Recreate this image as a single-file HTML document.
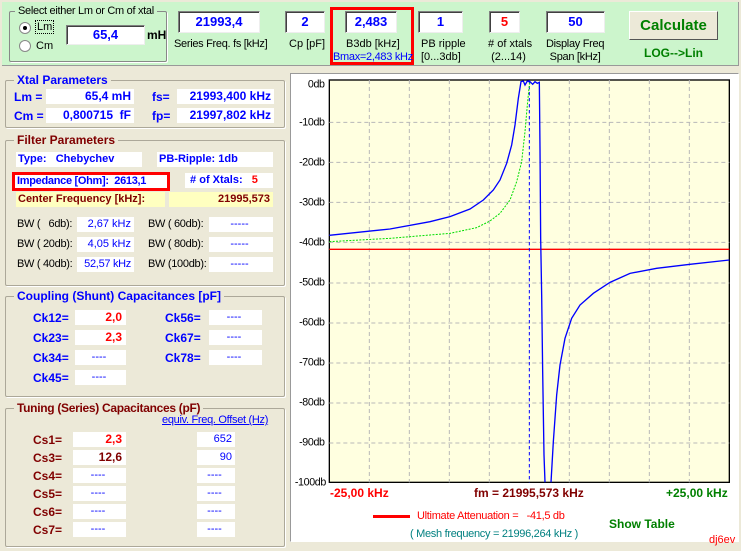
<!DOCTYPE html>
<html><head><meta charset="utf-8"><style>
*{margin:0;padding:0;box-sizing:border-box}
body{width:741px;height:551px;background:#ece9d8;font-family:"Liberation Sans",sans-serif;font-size:11px;position:relative;overflow:hidden}
.a{position:absolute;white-space:nowrap}
.b{font-weight:bold}
.in{position:absolute;background:#fff;border:1px solid #808080;border-right-color:#eee;border-bottom-color:#eee;box-shadow:inset 1px 1px 0 #404040;text-align:center;font-weight:bold;color:#00f;font-size:13px;line-height:18px;white-space:nowrap}
.grp{position:absolute;border:1px solid #aca899;border-radius:2px;box-shadow:1px 1px 0 #fff}
.gt{position:absolute;top:-8px;left:8px;background:#ece9d8;padding:0 3px;font-weight:bold;font-size:12px;white-space:nowrap}
.blue{color:#00f}.red{color:#f00}.dred{color:#800000}.grn{color:#008000}
.v{position:absolute;background:#fff;text-align:right;padding-right:3px;line-height:15px;white-space:nowrap;overflow:hidden}
.s{letter-spacing:-0.3px}
</style></head><body>
<div class="a" style="left:2px;top:2px;width:737px;height:64px;background:#ccf5cc;border-bottom:1px solid #999;border-right:1px solid #999"></div>
<div class="grp" style="left:9px;top:11px;width:158px;height:51px;border-color:#888"><div class="gt s" style="background:#ccf5cc;font-weight:normal;font-size:11px;left:5px;top:-7px">Select either Lm or Cm of xtal</div></div>
<div class="a" style="left:19px;top:22px;width:12px;height:12px;border-radius:50%;background:#fff;border:1px solid #888"><div style="position:absolute;left:3px;top:3px;width:4px;height:4px;border-radius:50%;background:#000"></div></div>
<div class="a" style="left:35px;top:20px;border:1px dotted #000;padding:0 1px">Lm</div>
<div class="a" style="left:19px;top:40px;width:12px;height:12px;border-radius:50%;background:#fff;border:1px solid #888"></div>
<div class="a" style="left:36px;top:40px">Cm</div>
<div class="in" style="left:66px;top:25px;width:79px;height:20px">65,4</div>
<div class="a b" style="left:147px;top:28px;font-size:12px">mH</div>
<div class="in" style="left:178px;top:11px;width:82px;height:22px;line-height:20px">21993,4</div>
<div class="a s" style="left:174px;top:38px">Series Freq. fs [kHz]</div>
<div class="in" style="left:285px;top:11px;width:40px;height:22px;line-height:20px">2</div>
<div class="a" style="left:289px;top:38px">Cp [pF]</div>
<div class="a" style="left:330px;top:7px;width:84px;height:58px;border:3px solid #f00"></div>
<div class="in" style="left:345px;top:11px;width:52px;height:22px;line-height:20px">2,483</div>
<div class="a" style="left:346px;top:38px">B3db [kHz]</div>
<div class="a blue s" style="left:333px;top:51px">Bmax=2,483 kHz</div>
<div class="in" style="left:418px;top:11px;width:45px;height:22px;line-height:20px">1</div>
<div class="a" style="left:421px;top:38px;line-height:13px">PB ripple<br>[0...3db]</div>
<div class="in" style="left:489px;top:11px;width:31px;height:22px;line-height:20px;color:#f00">5</div>
<div class="a" style="left:485px;top:38px;line-height:13px;text-align:center">&nbsp;# of xtals<br>(2...14)</div>
<div class="in" style="left:546px;top:11px;width:59px;height:22px;line-height:20px">50</div>
<div class="a s" style="left:546px;top:38px;line-height:13px;text-align:center">Display Freq<br>Span [kHz]</div>
<div class="a b grn" style="left:629px;top:11px;width:89px;height:29px;background:#ece9d8;border:1px solid #fff;border-right-color:#555;border-bottom-color:#555;text-align:center;line-height:27px;font-size:15px">Calculate</div>
<div class="a b grn" style="left:644px;top:46px;font-size:12px">LOG--&gt;Lin</div>

<div class="grp" style="left:5px;top:80px;width:280px;height:48px"><div class="gt blue">Xtal Parameters</div></div>
<div class="a b blue" style="left:14px;top:90px;font-size:12px">Lm =</div>
<div class="v b blue" style="left:46px;top:89px;width:88px;font-size:12px">65,4 mH</div>
<div class="a b blue" style="left:152px;top:90px;font-size:12px">fs=</div>
<div class="v b blue" style="left:177px;top:89px;width:97px;font-size:12px">21993,400 kHz</div>
<div class="a b blue" style="left:14px;top:109px;font-size:12px">Cm =</div>
<div class="v b blue" style="left:46px;top:108px;width:88px;font-size:12px">0,800715&nbsp; fF</div>
<div class="a b blue" style="left:152px;top:109px;font-size:12px">fp=</div>
<div class="v b blue" style="left:177px;top:108px;width:97px;font-size:12px">21997,802 kHz</div>

<div class="grp" style="left:5px;top:140px;width:280px;height:146px"><div class="gt dred">Filter Parameters</div></div>
<div class="v b blue" style="left:16px;top:152px;width:126px;text-align:left;padding-left:2px">Type:&nbsp;&nbsp; Chebychev</div>
<div class="v b blue" style="left:157px;top:152px;width:116px;text-align:left;padding-left:2px">PB-Ripple: 1db</div>
<div class="a" style="left:12px;top:172px;width:158px;height:19px;border:3px solid #f00;background:#fff"></div>
<div class="a b blue s" style="left:17px;top:175px">Impedance [Ohm]:&nbsp; 2613,1</div>
<div class="v b blue" style="left:185px;top:173px;width:88px;text-align:left;padding-left:2px">&nbsp;# of Xtals:&nbsp;&nbsp; <span class="red">5</span></div>
<div class="v b dred" style="left:16px;top:192px;width:149px;background:#ffffc0;text-align:left;padding-left:2px">Center Frequency [kHz]:</div>
<div class="v b dred" style="left:169px;top:192px;width:104px;background:#ffffc0">21995,573</div>
<div class="a s" style="left:17px;top:218px">BW (&nbsp;&nbsp; 6db):</div>
<div class="v blue" style="left:77px;top:217px;width:57px">2,67 kHz</div>
<div class="a s" style="left:148px;top:218px">BW ( 60db):</div>
<div class="v blue" style="left:209px;top:217px;width:64px;text-align:center">-----</div>
<div class="a s" style="left:17px;top:238px">BW ( 20db):</div>
<div class="v blue" style="left:77px;top:237px;width:57px">4,05 kHz</div>
<div class="a s" style="left:148px;top:238px">BW ( 80db):</div>
<div class="v blue" style="left:209px;top:237px;width:64px;text-align:center">-----</div>
<div class="a s" style="left:17px;top:258px">BW ( 40db):</div>
<div class="v blue s" style="left:77px;top:257px;width:57px">52,57 kHz</div>
<div class="a s" style="left:148px;top:258px">BW (100db):</div>
<div class="v blue" style="left:209px;top:257px;width:64px;text-align:center">-----</div>

<div class="grp" style="left:5px;top:296px;width:280px;height:101px"><div class="gt blue">Coupling (Shunt) Capacitances [pF]</div></div>
<div class="a b blue" style="left:33px;top:311px;font-size:12px">Ck12=</div><div class="v b red" style="left:75px;top:310px;width:51px;font-size:12px;padding-right:4px">2,0</div>
<div class="a b blue" style="left:33px;top:331px;font-size:12px">Ck23=</div><div class="v b red" style="left:75px;top:330px;width:51px;font-size:12px;padding-right:4px">2,3</div>
<div class="a b blue" style="left:33px;top:351px;font-size:12px">Ck34=</div><div class="v blue" style="left:75px;top:350px;width:51px;text-align:center">----</div>
<div class="a b blue" style="left:33px;top:371px;font-size:12px">Ck45=</div><div class="v blue" style="left:75px;top:370px;width:51px;text-align:center">----</div>
<div class="a b blue" style="left:165px;top:311px;font-size:12px">Ck56=</div><div class="v blue" style="left:209px;top:310px;width:53px;text-align:center">----</div>
<div class="a b blue" style="left:165px;top:331px;font-size:12px">Ck67=</div><div class="v blue" style="left:209px;top:330px;width:53px;text-align:center">----</div>
<div class="a b blue" style="left:165px;top:351px;font-size:12px">Ck78=</div><div class="v blue" style="left:209px;top:350px;width:53px;text-align:center">----</div>

<div class="grp" style="left:5px;top:408px;width:280px;height:139px"><div class="gt dred s">Tuning (Series) Capacitances (pF)</div></div>
<div class="a blue s" style="left:162px;top:414px;text-decoration:underline">equiv. Freq. Offset (Hz)</div>
<div class="a b dred" style="left:33px;top:433px;font-size:12px">Cs1=</div><div class="v b red" style="left:73px;top:432px;width:53px;font-size:12px;padding-right:4px">2,3</div><div class="v blue" style="left:197px;top:432px;width:38px">652</div>
<div class="a b dred" style="left:33px;top:451px;font-size:12px">Cs3=</div><div class="v b dred" style="left:73px;top:450px;width:53px;font-size:12px;padding-right:4px">12,6</div><div class="v blue" style="left:197px;top:450px;width:38px">90</div>
<div class="a b dred" style="left:33px;top:469px;font-size:12px">Cs4=</div><div class="v blue" style="left:73px;top:468px;width:53px;text-align:center">----</div><div class="v blue" style="left:197px;top:468px;width:38px;text-align:center">----</div>
<div class="a b dred" style="left:33px;top:487px;font-size:12px">Cs5=</div><div class="v blue" style="left:73px;top:486px;width:53px;text-align:center">----</div><div class="v blue" style="left:197px;top:486px;width:38px;text-align:center">----</div>
<div class="a b dred" style="left:33px;top:505px;font-size:12px">Cs6=</div><div class="v blue" style="left:73px;top:504px;width:53px;text-align:center">----</div><div class="v blue" style="left:197px;top:504px;width:38px;text-align:center">----</div>
<div class="a b dred" style="left:33px;top:523px;font-size:12px">Cs7=</div><div class="v blue" style="left:73px;top:522px;width:53px;text-align:center">----</div><div class="v blue" style="left:197px;top:522px;width:38px;text-align:center">----</div>

<div class="a" style="left:290px;top:73px;width:449px;height:469px;background:#fff;border:1px solid #999;border-right-color:#fff;border-bottom-color:#fff"></div>
<svg class="a" style="left:290px;top:65px" width="451" height="430" viewBox="0 0 1353 1290">
<rect x="118" y="45" width="1200" height="1207" fill="#ffffe0" stroke="#000" stroke-width="4"/>
<g stroke="#b8b8b8" stroke-width="3" stroke-dasharray="12,9">
<path d="M238 45V1252M358 45V1252M478 45V1252M598 45V1252M838 45V1252M958 45V1252M1078 45V1252M1198 45V1252"/>
<path d="M118 172H1318M118 292H1318M118 412H1318M118 532H1318M118 654H1318M118 774H1318M118 894H1318M118 1014H1318M118 1134H1318"/>
</g>
<g font-family="Liberation Sans,sans-serif" font-size="32" text-anchor="end" fill="#000" letter-spacing="-1">
<text x="104" y="68">0db</text><text x="104" y="182">-10db</text><text x="104" y="302">-20db</text><text x="104" y="422">-30db</text><text x="104" y="542">-40db</text><text x="104" y="662">-50db</text><text x="104" y="782">-60db</text><text x="104" y="902">-70db</text><text x="104" y="1022">-80db</text><text x="104" y="1142">-90db</text><text x="108" y="1262">-100db</text>
</g>
<path d="M118 553H1318" stroke="#f00" stroke-width="4"/>
<path d="M718 45V1252" stroke="#00f" stroke-width="3" stroke-dasharray="10,8"/>
<path d="M118 530L300 520L480 505L560 488L600 468L630 445L660 405L680 350L695 290L705 200L712 120L717 70L720 50" fill="none" stroke="#0d0" stroke-width="3" stroke-dasharray="6,4"/>
<path d="M118 511L300 492L420 470L480 455L540 432L580 405L610 375L630 345L650 295L665 240L675 180L685 100L693 50L700 48L705 60L712 48L720 50L728 58L735 50L742 55L748 52L750 250L752 520L755 690L758 920L762 1170L765 1252M783 1252L790 1130L800 990L810 900L825 820L845 760L870 720L910 685L960 652L1020 625L1100 610L1200 598L1318 585" fill="none" stroke="#00f" stroke-width="4"/>
</svg>
<div class="a b red" style="left:330px;top:486px;font-size:12px">-25,00 kHz</div>
<div class="a b dred" style="left:474px;top:486px;font-size:12px">fm = 21995,573 kHz</div>
<div class="a b grn" style="left:666px;top:486px;font-size:12px">+25,00 kHz</div>
<div class="a" style="left:373px;top:515px;width:37px;height:3px;background:#f00"></div>
<div class="a red s" style="left:417px;top:510px">Ultimate Attenuation =&nbsp;&nbsp; -41,5 db</div>
<div class="a s" style="left:410px;top:528px;color:#008080">( Mesh frequency = 21996,264 kHz )</div>
<div class="a b grn" style="left:609px;top:517px;font-size:12px">Show Table</div>
<div class="a red" style="left:709px;top:534px;font-size:11px">dj6ev</div>
</body></html>
